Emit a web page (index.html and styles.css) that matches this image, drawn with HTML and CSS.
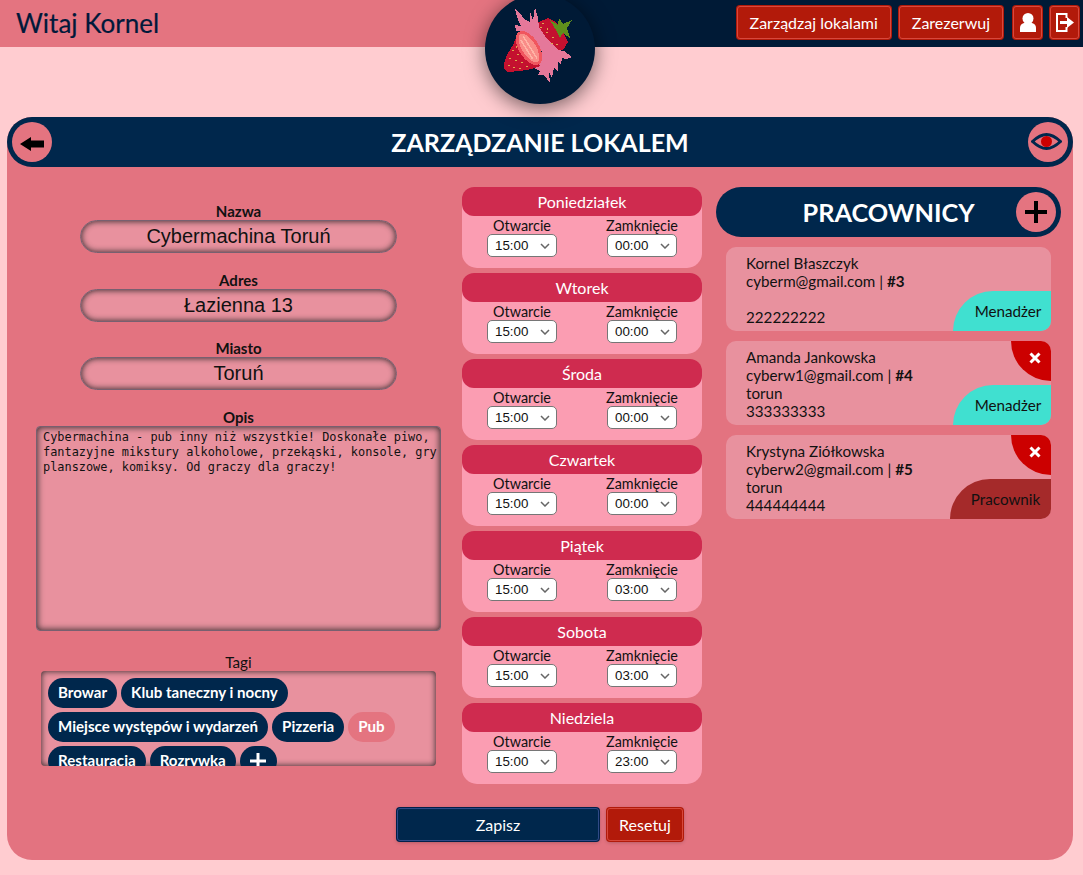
FILE: index.html
```html
<!DOCTYPE html>
<html lang="pl">
<head>
    <meta charset="UTF-8">
    <title>Zarządzanie lokalem</title>
    <link rel="stylesheet" href="styles.css">
</head>
<body>

    <header class="topbar">
        <h1 class="greeting">Witaj Kornel</h1>
        <nav class="top-nav">
            <button class="btn-red">Zarządzaj lokalami</button>
            <button class="btn-red">Zarezerwuj</button>
            <div class="icon-btns">
                <button class="btn-red btn-icon" aria-label="Profil">
                    <svg width="16" height="19" viewBox="0 0 16 19"><circle cx="8" cy="5.500" r="5.500"/><path d="M0 19v-4q0-4 4-5h8q4 1 4 5v4z"/></svg>
                </button>
                <button class="btn-red btn-icon" aria-label="Wyloguj">
                    <svg width="18" height="19" viewBox="0 0 18 19"><path d="M10.500 5V1H1v17h9.500v-4" fill="none" stroke="#fff" stroke-width="2"/><path d="M4 8h7V4l7 5.500-7 5.500v-4H4z"/></svg>
                </button>
            </div>
        </nav>
    </header>

    <!-- Logo -->
    <div class="logo">
        <svg width="110" height="110" viewBox="5 -6 110 110" shape-rendering="crispEdges">
            <path fill="#c4112f" d="M57 23L68 18L76 22L84 34L88 42L83 50L76 52L66 42L60 34L57 30Z"/>
            <path fill="#5f8f1c" d="M70 20L78 25L79 18L83 24L92 20L87 28L90 38L83 33L80 38L76 30Z"/>
            <path fill="#e5789a" d="M35 9L41 14L44 19L50 22L50 12L53 20L55 7L58 18L59 27L65 36L72 44L78 50L84 51L92 57L86 59L82 58L81 64L78 62L78 72L74 68L72 78L69 72L70 83L64 75L58 75L60 71L54 68L60 62L62 52L54 40L46 32L36 31L35 25L41 26L38 20Z"/>
            <path fill="#c4112f" d="M24 63L27 55L33 45L36 38L42 35L52 53L60 66L52 69L40 71L28 72L24 69Z"/>
            <g transform="rotate(58 49 48)">
                <ellipse cx="49" cy="48" rx="19" ry="10" fill="#f0565f"/>
                <ellipse cx="49" cy="48" rx="16" ry="7" fill="#f98d88"/>
                <path fill="#ffb3a6" d="M36 46h26v1.500H36zM38 50h22v1.500H38z"/>
            </g>
            <path fill="#dcaa4e" d="M32 50h2v1h-2zM37 54h2v1h-2zM29 58h2v1h-2zM35 60h2v1h-2zM41 62h2v1h-2zM28 65h2v1h-2zM33 67h2v1h-2zM39 68h2v1h-2zM46 66h2v1h-2zM36 46h1v2h-1zM62 23h2v1h-2zM60 27h2v1h-2zM66 32h2v1h-2zM72 37h2v1h-2zM76 44h2v1h-2zM71 43h2v1h-2zM67 28h1v2h-1z"/>
        </svg>
    </div>

    <main class="panel">
        <div class="panel-title">
            <button class="round-btn" aria-label="Wstecz">
                <svg class="back-arrow" width="24" height="14" viewBox="0 0 24 14"><path d="M0 7L11 0V3.500H24V10.500H11V14Z"/></svg>
            </button>
            <h2>ZARZĄDZANIE LOKALEM</h2>
            <button class="round-btn" aria-label="Podgląd">
                <svg class="eye" width="31" height="17" viewBox="0 0 31 17"><path d="M1.500 8.500Q9 1.500 15.500 1.500t14 7q-7.500 7-14 7t-14-7z" fill="none" stroke="#00274c" stroke-width="3"/><circle cx="15.500" cy="8.500" r="5.500" fill="#cc0000"/></svg>
            </button>
        </div>

        <div class="columns">
            <!-- Dane lokalu -->
            <section class="info">
                <div class="field">
                    <label>Nazwa</label>
                    <input class="pill-input" type="text" value="Cybermachina Toruń">
                </div>
                <div class="field">
                    <label>Adres</label>
                    <input class="pill-input" type="text" value="Łazienna 13">
                </div>
                <div class="field">
                    <label>Miasto</label>
                    <input class="pill-input" type="text" value="Toruń">
                </div>
                <div class="field">
                    <label>Opis</label>
                    <textarea class="desc">Cybermachina - pub inny niż wszystkie! Doskonałe piwo, fantazyjne mikstury alkoholowe, przekąski, konsole, gry planszowe, komiksy. Od graczy dla graczy!</textarea>
                </div>
                <div class="field field-tags">
                    <span class="tags-label">Tagi</span>
                    <div class="tags">
                        <span class="tag">Browar</span>
                        <span class="tag">Klub taneczny i nocny</span>
                        <span class="tag">Miejsce występów i wydarzeń</span>
                        <span class="tag">Pizzeria</span>
                        <span class="tag tag-off">Pub</span>
                        <span class="tag">Restauracja</span>
                        <span class="tag">Rozrywka</span>
                        <span class="tag tag-add"><svg width="16" height="16" viewBox="0 0 16 16"><path d="M6.500 0h3v6.500H16v3H9.500V16h-3V9.500H0v-3h6.500z" fill="#fff"/></svg></span>
                    </div>
                </div>
            </section>

            <!-- Godziny otwarcia -->
            <section class="hours">
                <div class="day">
                    <div class="day-name">Poniedziałek</div>
                    <div class="day-times">
                        <div class="time"><span>Otwarcie</span><select><option>15:00</option></select></div>
                        <div class="time"><span>Zamknięcie</span><select><option>00:00</option></select></div>
                    </div>
                </div>
                <div class="day">
                    <div class="day-name">Wtorek</div>
                    <div class="day-times">
                        <div class="time"><span>Otwarcie</span><select><option>15:00</option></select></div>
                        <div class="time"><span>Zamknięcie</span><select><option>00:00</option></select></div>
                    </div>
                </div>
                <div class="day">
                    <div class="day-name">Środa</div>
                    <div class="day-times">
                        <div class="time"><span>Otwarcie</span><select><option>15:00</option></select></div>
                        <div class="time"><span>Zamknięcie</span><select><option>00:00</option></select></div>
                    </div>
                </div>
                <div class="day">
                    <div class="day-name">Czwartek</div>
                    <div class="day-times">
                        <div class="time"><span>Otwarcie</span><select><option>15:00</option></select></div>
                        <div class="time"><span>Zamknięcie</span><select><option>00:00</option></select></div>
                    </div>
                </div>
                <div class="day">
                    <div class="day-name">Piątek</div>
                    <div class="day-times">
                        <div class="time"><span>Otwarcie</span><select><option>15:00</option></select></div>
                        <div class="time"><span>Zamknięcie</span><select><option>03:00</option></select></div>
                    </div>
                </div>
                <div class="day">
                    <div class="day-name">Sobota</div>
                    <div class="day-times">
                        <div class="time"><span>Otwarcie</span><select><option>15:00</option></select></div>
                        <div class="time"><span>Zamknięcie</span><select><option>03:00</option></select></div>
                    </div>
                </div>
                <div class="day">
                    <div class="day-name">Niedziela</div>
                    <div class="day-times">
                        <div class="time"><span>Otwarcie</span><select><option>15:00</option></select></div>
                        <div class="time"><span>Zamknięcie</span><select><option>23:00</option></select></div>
                    </div>
                </div>
            </section>

            <!-- Pracownicy -->
            <section class="staff">
                <div class="staff-title">
                    <h2>PRACOWNICY</h2>
                    <button class="round-btn staff-add" aria-label="Dodaj">
                        <svg width="24" height="24" viewBox="0 0 24 24"><path d="M10 1h4v9h9v4h-9v9h-4v-9H1v-4h9z"/></svg>
                    </button>
                </div>
                <div class="staff-list">
                    <div class="worker">
                        <div>Kornel Błaszczyk</div>
                        <div>cyberm@gmail.com | <b>#3</b></div>
                        <div>&nbsp;</div>
                        <div>222222222</div>
                        <span class="role role-manager">Menadżer</span>
                    </div>
                    <div class="worker">
                        <div>Amanda Jankowska</div>
                        <div>cyberw1@gmail.com | <b>#4</b></div>
                        <div>torun</div>
                        <div>333333333</div>
                        <button class="remove" aria-label="Usuń"><svg width="12" height="12" viewBox="0 0 12 12"><path d="M1.500 1.500l9 9m0-9l-9 9" stroke="#fff" stroke-width="3"/></svg></button>
                        <span class="role role-manager">Menadżer</span>
                    </div>
                    <div class="worker">
                        <div>Krystyna Ziółkowska</div>
                        <div>cyberw2@gmail.com | <b>#5</b></div>
                        <div>torun</div>
                        <div>444444444</div>
                        <button class="remove" aria-label="Usuń"><svg width="12" height="12" viewBox="0 0 12 12"><path d="M1.500 1.500l9 9m0-9l-9 9" stroke="#fff" stroke-width="3"/></svg></button>
                        <span class="role role-worker">Pracownik</span>
                    </div>
                </div>
            </section>
        </div>

        <div class="actions">
            <button class="btn-save">Zapisz</button>
            <button class="btn-red btn-reset">Resetuj</button>
        </div>
    </main>

</body>
</html>
```

FILE: styles.css
```css
* {
    box-sizing: border-box;
}

body {
    margin: 0;
    background: #ffccd0;
    font-family: "Lato", sans-serif;
    color: #111;
}

button {
    font-family: "Lato", sans-serif;
    cursor: pointer;
}

.topbar {
    height: 47px;
    display: flex;
    justify-content: space-between;
    align-items: center;
    padding: 0 4px 0 16px;
    background: linear-gradient(to right, #e47480 50%, #001a36 50%);
}

.greeting {
    margin: 0 0 1px;
    font-size: 26px;
    font-weight: 400;
    -webkit-text-stroke: 0.2px #00193a;
    color: #00193a;
}

.top-nav {
    display: flex;
    gap: 8px;
    margin-top: -2px;
}

.icon-btns {
    display: flex;
    gap: 8px;
    margin-left: 2px;
}

.btn-red {
    height: 33px;
    padding: 0 12px;
    background: #b21a0a;
    color: #fff;
    font-size: 16px;
    border: 1px solid #d8483c;
    border-radius: 3px;
    box-shadow: 0 0 0 1px #b21a0a;
}

.btn-icon {
    width: 29px;
    padding: 0;
    display: flex;
    align-items: center;
    justify-content: center;
}

.btn-icon svg {
    fill: #fff;
}

.logo {
    position: absolute;
    left: 485px;
    top: -6px;
    width: 110px;
    height: 110px;
    border-radius: 50%;
    background: #001a36;
    box-shadow: 0 4px 20px rgba(0, 0, 0, 0.55);
}

.logo svg {
    display: block;
}

.panel {
    width: 1066px;
    height: 743px;
    margin: 70px 0 15px 7px;
    background: #e37380;
    border-radius: 25px;
}

.panel-title {
    height: 50px;
    display: flex;
    justify-content: space-between;
    align-items: center;
    padding: 0 5px;
    background: #00274c;
    border-radius: 25px;
}

.panel-title h2,
.staff-title h2 {
    margin: 0;
    color: #fff;
    font-size: 25px;
    font-weight: 700;
}

.staff-title h2 {
    font-size: 25.3px;
}

.round-btn {
    width: 40px;
    height: 40px;
    padding: 0;
    display: flex;
    align-items: center;
    justify-content: center;
    background: #e47480;
    border: none;
    border-radius: 50%;
}

.back-arrow {
    margin-top: 3px;
}

.eye {
    margin-top: -2px;
    margin-left: -3px;
}

.columns {
    display: grid;
    grid-template-columns: 441px 240px 345px;
    column-gap: 14px;
    margin-top: 20px;
}

/* lewa kolumna */
.info {
    display: flex;
    flex-direction: column;
    align-items: center;
    gap: 19.5px;
    padding-top: 17px;
    padding-left: 22px;
}

.field {
    display: flex;
    flex-direction: column;
    align-items: center;
}

.field label {
    height: 16px;
    line-height: 14px;
    font-size: 15px;
    font-weight: 700;
}

.pill-input {
    width: 317px;
    height: 33px;
    padding: 0 10px;
    text-align: center;
    font-family: "Liberation Sans", sans-serif;
    font-size: 20px;
    color: #111;
    background: #e8919e;
    border: 1px solid #776070;
    border-radius: 17px;
    box-shadow: inset 0 0 6px #222;
    outline: none;
}

.desc {
    display: block;
    width: 405px;
    height: 205px;
    padding: 3px 1px 3px 6px;
    font-family: "DejaVu Sans Mono", monospace;
    font-size: 11.9px;
    line-height: 15px;
    color: #111;
    background: #e8919e;
    border: 1px solid #776070;
    border-radius: 4px;
    box-shadow: inset 0 0 7px #222;
    outline: none;
    resize: none;
}

.field-tags {
    margin-top: 4px;
}

.tags-label {
    height: 17px;
    line-height: 17px;
    font-size: 15.2px;
}

.tags {
    width: 395px;
    height: 95px;
    padding: 7px;
    display: flex;
    flex-wrap: wrap;
    align-content: flex-start;
    gap: 4px;
    overflow: hidden;
    background: #e8919e;
    border-radius: 4px;
    box-shadow: inset 0 0 6px #222;
}

.tag {
    height: 30px;
    line-height: 29px;
    padding: 0 10px;
    background: #00274c;
    color: #fff;
    font-size: 15.1px;
    font-weight: 700;
    border-radius: 15px;
}

.tag-off {
    background: #e47480;
}

.tag-add {
    width: 37px;
    padding: 0;
    display: flex;
    align-items: center;
    justify-content: center;
}

/* godziny */
.hours {
    display: flex;
    flex-direction: column;
    gap: 5px;
}

.day {
    height: 81px;
    background: #fb9db2;
    border-radius: 15px;
}

.day-name {
    height: 29px;
    line-height: 29px;
    text-align: center;
    background: #cf2b4f;
    color: #fff;
    font-size: 16px;
    border-radius: 12px;
}

.day-times {
    display: grid;
    grid-template-columns: 1fr 1fr;
}

.time {
    display: flex;
    flex-direction: column;
    align-items: center;
    font-size: 14.4px;
}

.time span {
    height: 18px;
    line-height: 20px;
}

.time select {
    appearance: none;
    width: 70px;
    height: 23px;
    padding-left: 7px;
    font-family: "Liberation Sans", sans-serif;
    font-size: 13.33px;
    color: #111;
    background: #fff url("data:image/svg+xml,%3Csvg xmlns='http://www.w3.org/2000/svg' width='10' height='6'%3E%3Cpath d='M1 1l4 4 4-4' fill='none' stroke='%23666' stroke-width='1.500'/%3E%3C/svg%3E") no-repeat right 6px center;
    border: 1px solid #767676;
    border-radius: 5px;
}

/* pracownicy */
.staff-title {
    position: relative;
    height: 50px;
    display: flex;
    align-items: center;
    justify-content: center;
    background: #00274c;
    border-radius: 25px;
}

.staff-add {
    position: absolute;
    right: 5px;
    top: 5px;
}

.staff-list {
    display: flex;
    flex-direction: column;
    gap: 10px;
    margin: 10px 10px 0;
}

.worker {
    position: relative;
    height: 84px;
    padding: 7px 0 0 20px;
    font-size: 15.2px;
    line-height: 18px;
    background: #e8919e;
    border-radius: 10px;
    overflow: hidden;
}

.role {
    position: absolute;
    right: 0;
    bottom: 0;
    height: 40px;
    line-height: 41px;
    text-align: center;
    border-top-left-radius: 40px;
}

.role-manager {
    width: 98px;
    padding-left: 12px;
    background: #40e0d0;
}

.role-worker {
    width: 101px;
    padding-left: 10px;
    background: #a52a2a;
}

.remove {
    position: absolute;
    right: 0;
    top: 0;
    width: 40px;
    height: 40px;
    padding: 11px 0 0 18px;
    display: flex;
    align-items: flex-start;
    justify-content: flex-start;
    background: #cc0000;
    border: none;
    border-bottom-left-radius: 40px;
}

.actions {
    display: flex;
    justify-content: center;
    gap: 8px;
    margin-top: 24px;
}

.btn-save {
    width: 202px;
    height: 33px;
    background: #00274c;
    color: #fff;
    font-size: 16px;
    border: 1px solid #2f4a86;
    border-radius: 3px;
    box-shadow: 0 0 0 1px #00204a, 0 1px 4px rgba(0, 0, 0, 0.3);
}

.btn-reset {
    width: 76px;
    padding: 0;
    box-shadow: 0 0 0 1px #b21a0a, 0 1px 4px rgba(0, 0, 0, 0.3);
}
```
